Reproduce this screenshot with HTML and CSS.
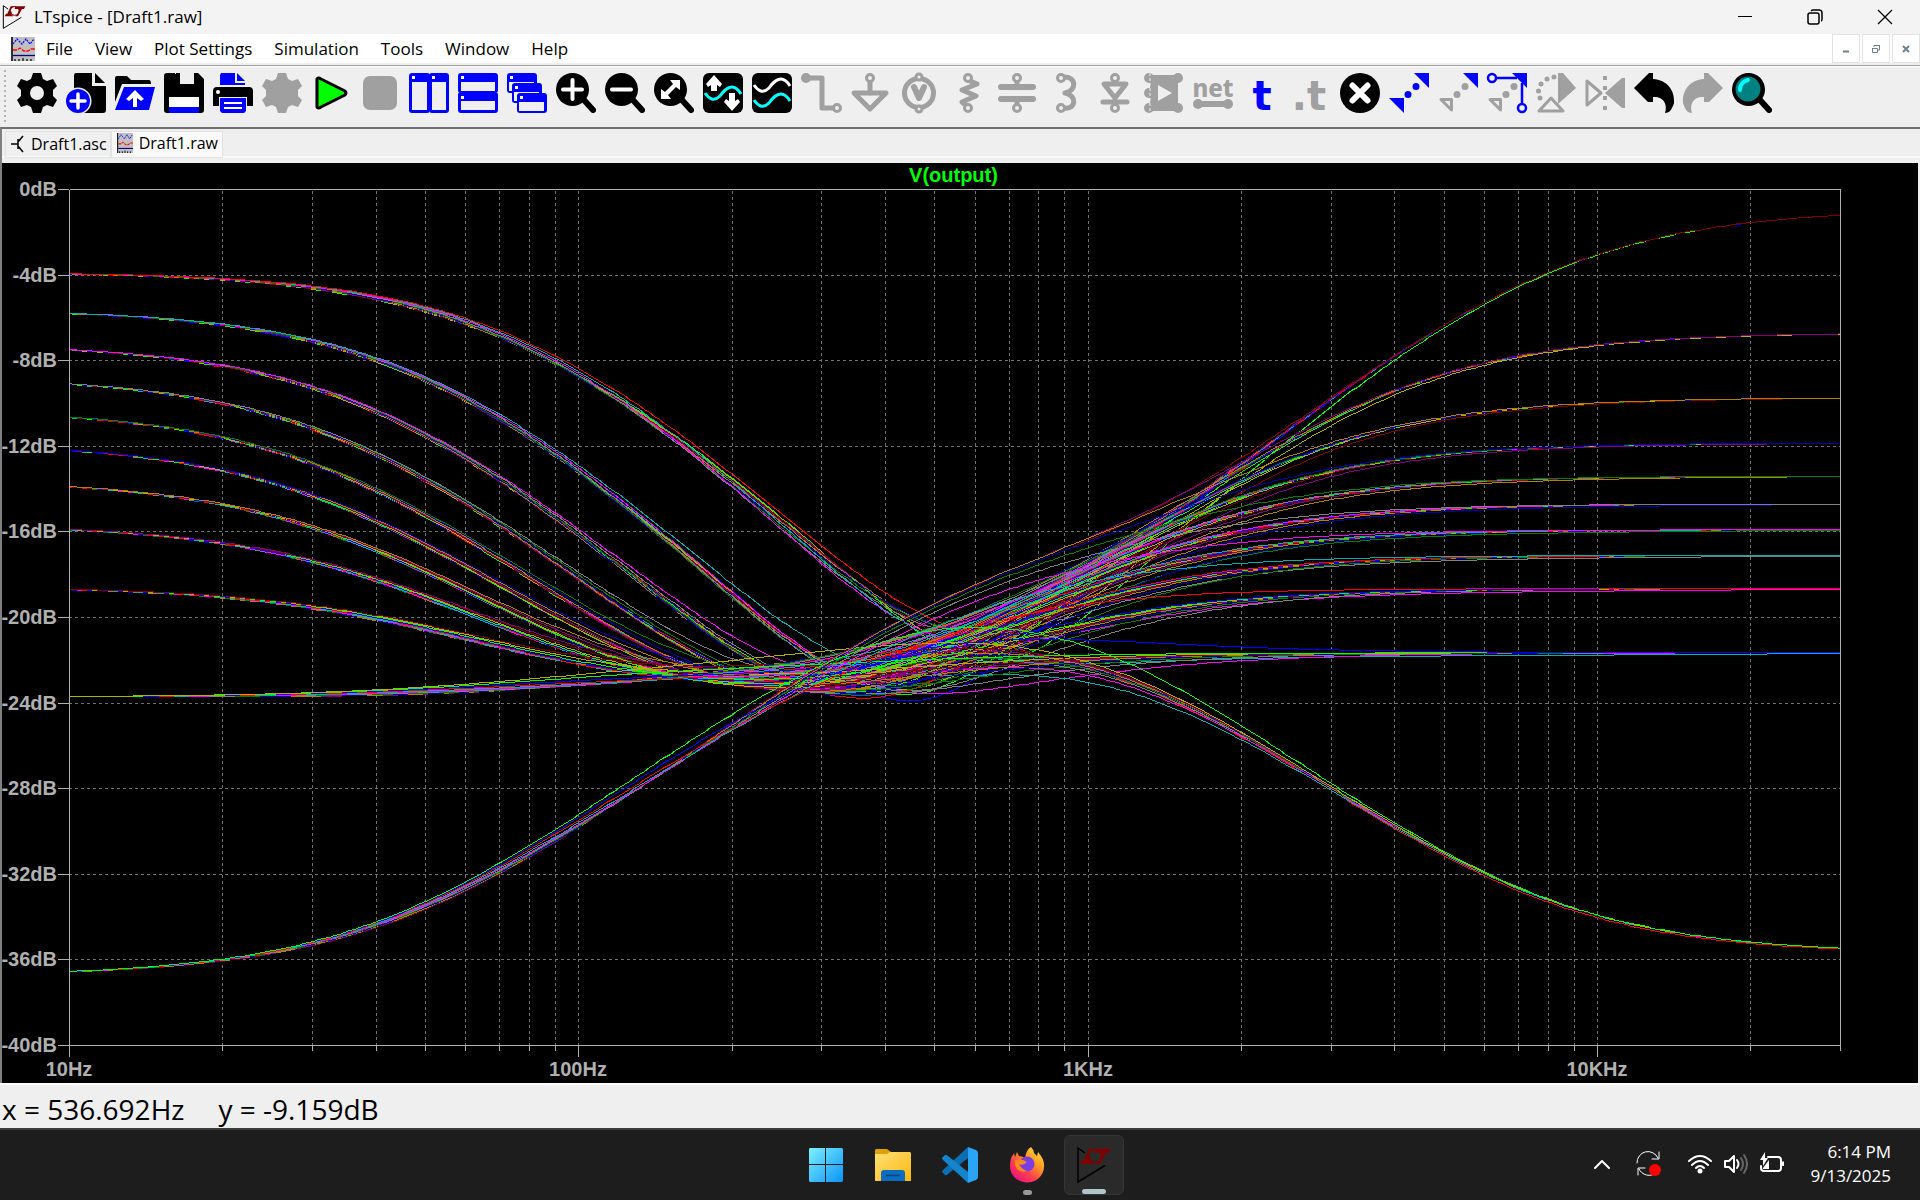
FILE: index.html
```html
<!DOCTYPE html>
<html lang="en">
<head>
<meta charset="utf-8">
<title>LTspice - [Draft1.raw]</title>
<link rel="stylesheet" href="styles.css">
</head>
<body>
<svg class="defs" width="0" height="0" aria-hidden="true">
  <symbol id="lt" viewBox="0 0 36 36">
    <path d="M9 6 2 1V35L29 18.500" fill="none" stroke="#000" stroke-width="1.500"/>
    <path d="M13 2H19Q13 5 13 9T17 17H4L6 13H8Z" fill="#800000"/>
    <path d="M20 2H35L33 6H30L24 17H20Q25 12 25 8L24 6H19Z" fill="#800000"/>
    <path d="M15 3Q21 0 24 6M13 9Q14 17 22 15" fill="none" stroke="#800000" stroke-width="1.500"/>
  </symbol>
  <symbol id="wave" viewBox="0 0 24 24" preserveAspectRatio="none">
    <path d="M0 0H24V24H0Z" fill="#c0c0c0"/>
    <path d="M1 0V24" stroke="#000" stroke-width="1.500"/>
    <path d="M2 7 6 2 11 7 15 2 19 7 23 2" fill="none" stroke="#00f" stroke-width="1.200" stroke-dasharray="2 1"/>
    <path d="M2 13H6L9 11 13 14H17L20 12H24" fill="none" stroke="#f00" stroke-width="1.300" stroke-dasharray="4 1"/>
    <path d="M2 18.500H24" stroke="#000080" stroke-width="1.300"/>
    <path d="M4 22V24M8 22V24M12 21V24M16 22V24M20 22V24" stroke="#000" stroke-width="1.200"/>
  </symbol>
  <symbol id="gear" viewBox="0 0 40 40">
    <path fill-rule="evenodd" d="M16 0H24L26 6 30 8 36 6 40 13 36 17V23L40 27 36 34 30 32 26 34 24 40H16L14 34 10 32 4 34 0 27 4 23V17L0 13 4 6 10 8 14 6ZM20 13A7 7 0 1 0 20 27 7 7 0 1 0 20 13Z"/>
  </symbol>
  <symbol id="lens" viewBox="0 0 40 40">
    <path d="M28 27 37 37" stroke="#000" stroke-width="6" stroke-linecap="round"/>
    <circle cx="16.500" cy="16.500" r="16.500"/>
  </symbol>
</svg>

<header class="titlebar">
  <svg class="title-icon"><use href="#lt"/></svg>
  <h1 class="title">LTspice - [Draft1.raw]</h1>
  <div class="window-buttons">
    <button aria-label="Minimize"><svg width="16" height="16"><path d="M1 7.500H15" stroke="#000"/></svg></button>
    <button aria-label="Restore"><svg width="16" height="16" fill="none" stroke="#000" stroke-width="1.500"><rect x="1" y="4" width="11" height="11" rx="2"/><path d="M4 2Q5 1 6 1H12Q15 1 15 4V10Q15 12 14 12"/></svg></button>
    <button aria-label="Close"><svg width="16" height="16"><path d="M1 1 15 15M15 1 1 15" stroke="#000" stroke-width="1.300"/></svg></button>
  </div>
</header>

<nav class="menubar" aria-label="Menu">
  <svg class="menu-icon"><use href="#wave"/></svg>
  <button>File</button><button>View</button><button>Plot Settings</button><button>Simulation</button><button>Tools</button><button>Window</button><button>Help</button>
  <div class="mdi-buttons">
    <button aria-label="Minimize document"><svg width="10" height="10"><path d="M2 7.500H8" stroke="#708090" stroke-width="2"/></svg></button>
    <button aria-label="Restore document"><svg width="10" height="10" fill="none" stroke="#708090"><path d="M3 3V1.500H8.500V6H7"/><path d="M1 4.500H6.500V8.500H1.500V4M3 1.500H9"/></svg></button>
    <button aria-label="Close document"><svg width="10" height="10"><path d="M2 2 8 8M8 2 2 8" stroke="#708090" stroke-width="2"/></svg></button>
  </div>
</nav>

<div class="toolbar" role="toolbar" aria-label="Tools">
  <span class="grip"></span>
  <button aria-label="Settings"><svg viewBox="0 0 40 40"><use href="#gear"/></svg></button>
  <button aria-label="New schematic"><svg viewBox="0 0 40 40"><path d="M10 0H26V13H40V37Q40 40 37 40H8V3Q8 0 10 0Z"/><path d="M29 0 39 10H29Z"/><circle cx="12" cy="28" r="13.500" fill="#efefef"/><circle cx="12" cy="28" r="12" fill="#00f"/><path d="M12 21V35M5 28H19" stroke="#fff" stroke-width="3.500" stroke-linecap="round"/></svg></button>
  <button aria-label="Open"><svg viewBox="0 0 40 40"><path d="M2 3H12L16 7H34Q36 7 36 11H7L0 29V5Q0 3 2 3Z"/><path d="M9 14H40L34 37H0Z" fill="#00f"/><path d="M20 17 29 26 26 28 22 25V34H18V25L14 28 11 26Z" fill="#fff"/></svg></button>
  <button aria-label="Save"><svg viewBox="0 0 40 40"><path d="M3 0H34L40 6V37Q40 40 37 40H3Q0 40 0 37V3Q0 0 3 0Z"/><path d="M11 0H30V11H11Z" fill="#efefef"/><path d="M12 0H16V10H12Z"/><path d="M11 1H16V11H11Z"/><path d="M5 24H35V34H5Z" fill="#fff"/><path d="M5 34H35V40H5Z" fill="#00f"/></svg></button>
  <button aria-label="Print"><svg viewBox="0 0 40 40"><path d="M8 0H22V10H32V12H7V2Z" fill="#00f"/><path d="M24 0 32 8H24Z" fill="#00f"/><path d="M4 14H36Q40 14 40 18V33H34V24H6V33H0V18Q0 14 4 14Z"/><circle cx="5" cy="19" r="2" fill="#fff"/><path d="M7 25H33V38L31 40H9L7 38Z" fill="#00f"/><path d="M11 30H29M11 35H29" stroke="#fff" stroke-width="2"/></svg></button>
  <button class="off" aria-label="Configure analysis" disabled><svg viewBox="0 0 40 40"><use href="#gear"/><circle cx="20" cy="20" r="9"/></svg></button>
  <button aria-label="Run"><svg viewBox="0 0 40 40"><path d="M6 6Q7 4 10 6L34 18Q36 20 34 22L10 34Q7 36 6 34Z" fill="#0f0" stroke="#000" stroke-width="3" stroke-linejoin="round"/></svg></button>
  <button class="off" aria-label="Stop" disabled><svg viewBox="0 0 40 40"><rect x="3" y="3" width="34" height="34" rx="7"/></svg></button>
  <button aria-label="Tile vertically"><svg viewBox="0 0 40 40"><rect width="21" height="40" rx="3" fill="#00f"/><rect x="20" width="20" height="40" rx="3" fill="#00f"/><path d="M3 9H18V37H3ZM23 9H37V37H23Z" fill="#efefef"/><path d="M3 3H6V6H3ZM23 3H26V6H23Z" fill="#fff"/></svg></button>
  <button aria-label="Tile horizontally"><svg viewBox="0 0 40 40"><rect width="40" height="20" rx="3" fill="#00f"/><rect y="19" width="40" height="21" rx="3" fill="#00f"/><path d="M3 9H37V18H3ZM3 28H37V37H3Z" fill="#efefef"/><path d="M3 3H6V6H3ZM3 23H6V26H3Z" fill="#fff"/></svg></button>
  <button aria-label="Cascade"><svg viewBox="0 0 40 40"><g id="card"><rect width="30" height="20" rx="3" fill="#00f"/><path d="M2 9H27V18H2Z" fill="#efefef"/><path d="M3 3H6V6H3Z" fill="#fff"/></g><use href="#card" x="5" y="10"/><use href="#card" x="10" y="20"/></svg></button>
  <button aria-label="Zoom in"><svg viewBox="0 0 40 40"><use href="#lens"/><path d="M16.500 7V26M7 16.500H26" stroke="#fff" stroke-width="4" stroke-linecap="round"/></svg></button>
  <button aria-label="Zoom out"><svg viewBox="0 0 40 40"><use href="#lens"/><path d="M7 16.500H26" stroke="#fff" stroke-width="4" stroke-linecap="round"/></svg></button>
  <button aria-label="Zoom to fit"><svg viewBox="0 0 40 40"><use href="#lens"/><path d="M16 7H26V17L22 14 14 22 17 26H7V16L11 19 19 11Z" fill="#fff"/></svg></button>
  <button aria-label="Autorange"><svg viewBox="0 0 40 40"><rect width="40" height="40" rx="6"/><path d="M2 20C6 26 11 29 17 23C22 16 30 8 38 21" fill="none" stroke="#0ff" stroke-width="3"/><path d="M11 2 19 11 17 14 14 12V18H8V12L5 14 3 11ZM29 38 21 29 23 26 26 28V20H32V28L35 26 37 29Z" fill="#fff"/></svg></button>
  <button aria-label="Add traces"><svg viewBox="0 0 40 40"><rect width="40" height="40" rx="6"/><path d="M2 12C6 18 11 21 17 15C22 8 30 0 38 13" fill="none" stroke="#fff" stroke-width="3"/><path d="M2 27C6 33 11 36 17 30C22 23 30 15 38 28" fill="none" stroke="#0ff" stroke-width="3"/></svg></button>
  <button class="off" aria-label="Wire" disabled><svg viewBox="0 0 40 40"><circle cx="5" cy="5" r="5"/><path d="M5 5H21V35H33" class="line"/><circle cx="36" cy="35" r="3.500" class="line thin hole"/></svg></button>
  <button class="off" aria-label="Ground" disabled><svg viewBox="0 0 40 40"><path d="M4 20H36L20 36Z" class="line"/><path d="M20 8V20" class="line"/><circle cx="20" cy="5" r="3.500" class="line thin hole"/></svg></button>
  <button class="off" aria-label="Voltage source" disabled><svg viewBox="0 0 40 40"><circle cx="20" cy="20" r="14.500" class="line"/><path d="M15 14 20 25 25 14" class="line wide"/><circle cx="20" cy="4" r="3" class="line thin hole"/><circle cx="20" cy="36" r="3" class="line thin hole"/></svg></button>
  <button class="off" aria-label="Resistor" disabled><svg viewBox="0 0 40 40"><path d="M20 7 29 11 14 17 28 23 14 29 20 34" class="line"/><circle cx="20" cy="5" r="3.500" class="line thin hole"/><circle cx="20" cy="35" r="3.500" class="line thin hole"/></svg></button>
  <button class="off" aria-label="Capacitor" disabled><svg viewBox="0 0 40 40"><path d="M4 14H36M4 26H36" class="line wide"/><path d="M20 8V14M20 26V32" class="line"/><circle cx="20" cy="5" r="3.500" class="line thin hole"/><circle cx="20" cy="35" r="3.500" class="line thin hole"/></svg></button>
  <button class="off" aria-label="Inductor" disabled><svg viewBox="0 0 40 40"><path d="M17 4C31 3 31 18 19 20 31 22 31 37 17 35" class="line"/><circle cx="15" cy="5" r="3.500" class="line thin hole"/><circle cx="15" cy="35" r="3.500" class="line thin hole"/></svg></button>
  <button class="off" aria-label="Diode" disabled><svg viewBox="0 0 40 40"><path d="M9 11H31L20 25ZM8 29H32" class="line"/><circle cx="20" cy="5" r="3.500" class="line thin hole"/><circle cx="20" cy="35" r="3.500" class="line thin hole"/></svg></button>
  <button class="off" aria-label="Component" disabled><svg viewBox="0 0 40 40"><path fill-rule="evenodd" d="M6 2H34V38H6ZM14 12V28L28 20Z"/><circle cx="5" cy="5" r="5"/><circle cx="5" cy="20" r="5"/><circle cx="5" cy="35" r="5"/><circle cx="34" cy="5" r="5"/><circle cx="34" cy="35" r="5"/><path d="M6 0V40" stroke="#efefef" stroke-dasharray="3 2"/></svg></button>
  <button class="off" aria-label="Net name" disabled><svg viewBox="0 0 40 40"><text x="20" y="24" class="net">net</text><path d="M5 31H35" class="line wide"/><circle cx="5" cy="31" r="5"/><circle cx="35" cy="31" r="5"/></svg></button>
  <button aria-label="Text"><svg viewBox="0 0 40 40"><text x="20" y="37" class="letter" fill="#00f">t</text></svg></button>
  <button class="off" aria-label="Directive" disabled><svg viewBox="0 0 40 40"><text x="18" y="37" class="letter">.t</text></svg></button>
  <button aria-label="Delete"><svg viewBox="0 0 40 40"><circle cx="20" cy="20" r="20"/><path d="M12.500 12.500 27.500 27.500M27.500 12.500 12.500 27.500" stroke="#fff" stroke-width="6" stroke-linecap="round"/></svg></button>
  <button aria-label="Duplicate"><svg viewBox="0 0 40 40" fill="#00f"><path d="M25 0H40V15ZM0 25H15V40Z"/><circle cx="27" cy="13.500" r="3.500"/><circle cx="19" cy="21.500" r="3.500"/></svg></button>
  <button class="off" aria-label="Move" disabled><svg viewBox="0 0 40 40"><path d="M25 0H40V15Z" fill="#00f"/><path d="M3 26.500H13.500V37Z" class="line thin"/><circle cx="27" cy="13.500" r="3.500"/><circle cx="19" cy="21.500" r="3.500"/></svg></button>
  <button class="off" aria-label="Drag" disabled><svg viewBox="0 0 40 40"><path d="M25 0H40V15Z" fill="#00f"/><path d="M3 26.500H13.500V37Z" class="line thin"/><circle cx="27" cy="13.500" r="3.500"/><circle cx="19" cy="21.500" r="3.500"/><g fill="none" stroke="#00f" stroke-width="2.500"><circle cx="5" cy="5" r="4"/><circle cx="35" cy="35" r="4"/><path d="M9 5H30M35 10V31"/></g></svg></button>
  <button class="off" aria-label="Rotate" disabled><svg viewBox="0 0 40 40"><path d="M22 0H27L40 15 22 31Z"/><path d="M3 38 15 25 27 38Z" class="line thin"/><circle cx="18" cy="4" r="2.500"/><circle cx="11" cy="6" r="2.500"/><circle cx="5" cy="11" r="2.500"/><circle cx="2.500" cy="18" r="2.500"/><circle cx="4" cy="25" r="2.500"/></svg></button>
  <button class="off" aria-label="Mirror" disabled><svg viewBox="0 0 40 40"><path d="M2 8V32L16 20Z" class="line thin"/><path d="M40 5V35H37L20 20 37 5Z"/><path d="M20 3V40" stroke="#a0a0a0" stroke-width="4" stroke-dasharray="4 6"/></svg></button>
  <button aria-label="Undo"><svg viewBox="0 0 40 40"><path d="M0 15 15 0H19V6C33 7 41 17 40 30 38 36 36 40 31 40 34 31 29 23 19 24V29H14Z"/></svg></button>
  <button class="off" aria-label="Redo" disabled><svg viewBox="0 0 40 40"><path d="M40 15 25 0H21V6C7 7-1 17 0 30 2 36 4 40 9 40 6 31 11 23 21 24V29H26Z"/></svg></button>
  <button aria-label="Search"><svg viewBox="0 0 40 40"><use href="#lens"/><circle cx="16" cy="16" r="12.500" fill="#008080"/><path d="M8 17Q8 9 16 7" stroke="#0ff" stroke-width="4" fill="none" stroke-linecap="round"/></svg></button>
</div>

<div class="tabs" role="tablist">
  <button role="tab" class="tab"><svg viewBox="0 0 16 20"><path d="M2 10H9M9 5V15M9 8 14 2M9 12 14 18" stroke="#000" fill="none" stroke-width="1.500"/></svg>Draft1.asc</button>
  <button role="tab" class="tab active" aria-selected="true"><svg><use href="#wave"/></svg>Draft1.raw</button>
</div>

<main class="plot"><svg id="plot" role="img" aria-label="V(output)"></svg></main>

<footer class="status"><span>x = 536.692Hz</span><span>y = -9.159dB</span></footer>

<div class="taskbar">
  <div></div>
  <div class="apps">
    <button aria-label="Start"><svg viewBox="0 0 36 36"><defs><linearGradient id="win" x2="1" y2="1"><stop stop-color="#7df0ff"/><stop offset="1" stop-color="#0a94fa"/></linearGradient></defs><path fill="url(#win)" d="M2 1H17V17H1V2ZM18 1H34L35 2V17H18ZM1 18H17V35H2L1 34ZM18 18H35V34L34 35H18Z"/></svg></button>
    <button aria-label="File Explorer"><svg viewBox="0 0 36 36"><defs><linearGradient id="fold" x2="1" y2="1"><stop stop-color="#ffe07a"/><stop offset="1" stop-color="#fcb80c"/></linearGradient></defs><path d="M1 2H12L16 5V10H0V3Z" fill="#e0a008"/><path d="M0 7H12L15 5H35L36 6V34H0Z" fill="url(#fold)"/><path d="M9 23H27Q30 23 30 26V34H6V26Q6 23 9 23Z" fill="#0b6cc0"/><path d="M11 28.500H25" stroke="#06427c" stroke-width="1.500"/></svg></button>
    <button aria-label="Visual Studio Code"><svg viewBox="0 0 36 36"><path d="M26 0 1 23Q-1 25 1 26L3 28Q4 29 6 27L26 11Z" fill="#0b6fb4"/><path d="M26 36 1 13Q-1 11 1 10L3 8Q4 7 6 9L26 25Z" fill="#1484cc"/><path d="M26 0 34 3Q36 4 36 6V30Q36 32 34 33L26 36Z" fill="#2aa4f4"/></svg></button>
    <button class="running" aria-label="Firefox"><svg viewBox="0 0 36 36"><defs><linearGradient id="fox" x1="1" x2="0.200" y2="1"><stop stop-color="#fff04a"/><stop offset=".4" stop-color="#ff9a20"/><stop offset=".7" stop-color="#ff3d50"/><stop offset="1" stop-color="#e01080"/></linearGradient></defs><path d="M22 0Q25 3 25 6L28 9 29 5Q36 13 35 20A17 16 0 0 1 1 19Q1 11 4 8L5 6 6 10 8 5 10 9Q13 9 16 11Q17 3 22 0Z" fill="url(#fox)"/><circle cx="18" cy="17" r="7.500" fill="#7a3ee0"/><path d="M6 13Q12 11 18 15 14 19 10 17 12 22 18 24 9 27 6 18Z" fill="#ff8a1c"/></svg></button>
    <button class="running current" aria-label="LTspice"><svg viewBox="0 0 36 36"><use href="#lt"/></svg></button>
  </div>
  <div class="tray">
    <button aria-label="Show hidden icons"><svg width="16" height="24"><path d="M1 16 8 9 15 16" class="glyph"/></svg></button>
    <button aria-label="Update available"><svg width="26" height="26"><path d="M1 12A11 11 0 0 1 22 7M23 1V8H16M20 22A11 11 0 0 1 3 18M2 24V17H9" class="glyph fine"/><circle cx="19" cy="19" r="6" fill="#f00"/></svg></button>
    <button class="quick" aria-label="Network, volume and battery">
      <svg width="24" height="24"><path d="M1 9Q12-1 23 9M4 13Q12 5 20 13M8 16Q12 12 16 16" class="glyph"/><circle cx="12" cy="19" r="2.500" fill="#fff"/></svg>
      <svg width="24" height="24"><path d="M1 9H5L10 4V20L5 15H1Z" class="glyph"/><path d="M13 8Q16 12 13 16" class="glyph"/><path d="M17 6Q21 12 17 18M20 3Q26 12 20 21" class="glyph dim"/></svg>
      <svg width="24" height="24"><path d="M8 5H18Q21 5 21 8V16Q21 19 18 19H4Q1 19 1 16V14" class="glyph"/><path d="M22 9.500H24V14H22ZM5 0V6H8L3 14V8H0ZM3 16 9 8V17H3Z" fill="#fff"/></svg>
    </button>
    <button class="clock"><span>6:14 PM</span><span>9/13/2025</span></button>
  </div>
</div>
<script src="plot.js"></script>
</body>
</html>
```
FILE: styles.css
```css
* { box-sizing: border-box; }
body {
  margin: 0;
  height: 100vh;
  display: flex;
  flex-direction: column;
  overflow: hidden;
  background: #efefef;
  color: #000;
  font: 17px/24px "Open Sans", "Noto Sans", sans-serif;
}
button { margin: 0; padding: 0; border: 0; background: none; color: inherit; font: inherit; }
svg { display: block; }
.defs { position: absolute; }

.titlebar { display: flex; align-items: center; height: 34px; background: #f3f3f3; }
.title-icon { width: 24px; height: 24px; margin: 0 8px 0 2px; }
.title { margin: 0; font-size: 17px; font-weight: 400; }
.window-buttons { display: flex; margin-left: auto; }
.window-buttons button { width: 70px; height: 34px; display: grid; place-items: center; }

.menubar { display: flex; align-items: center; height: 31px; padding-left: 11px; background: #fff; border-bottom: 2px solid #eee; }
.menu-icon { width: 24px; height: 24px; }
.menubar > button { padding: 0 11px; }
.mdi-buttons { display: flex; gap: 2px; margin-left: auto; align-self: stretch; }
.mdi-buttons button { width: 28px; display: grid; place-items: center; border: 1px solid #e3e3e3; }

.toolbar {
  display: flex;
  align-items: flex-start;
  gap: 9px;
  height: 62px;
  padding: 7px 0 0 4px;
  border-top: 1px solid #a0a0a0;
  box-shadow: inset 0 1px #fff;
}
.toolbar button { flex: 0 0 40px; height: 40px; }
.toolbar svg { width: 40px; height: 40px; overflow: visible; }
.grip { width: 4px; height: 52px; margin-top: -3px; background: repeating-linear-gradient(#b4b4b4 0 2px, transparent 2px 5px); background-size: 2px 100%; background-repeat: no-repeat; }
.off { fill: #a0a0a0; }
.line { fill: none; stroke: #a0a0a0; stroke-width: 5; stroke-linejoin: round; stroke-linecap: round; }
.thin { stroke-width: 3; }
.wide { stroke-width: 6; }
.hole { fill: #efefef; }
.net, .letter { text-anchor: middle; }
.net { font: 800 24px "Noto Sans", sans-serif; }
.letter { font: bold 40px "DejaVu Sans", sans-serif; }

.tabs {
  display: flex;
  align-items: flex-start;
  height: 36px;
  padding: 2px 0 0 3px;
  border-top: 2px solid #707070;
  border-left: 2px solid #808080;
  box-shadow: inset 0 -5px #efefef, inset 0 -7px #fafafa;
}
.tab { display: flex; align-items: center; gap: 6px; height: 27px; padding: 0 3px 2px; border: 1px solid #e2e2e2; font-size: 16px; }
.tab svg { width: 16px; height: 20px; }
.tab.active { background: #fafafa; padding: 0 4px 4px 5px; }

.plot { flex: 1; min-height: 0; margin-right: 2px; border-left: 2px solid #808080; background: #000; }
.plot svg { width: 100%; height: 100%; font: bold 20px "Liberation Sans", Arial, sans-serif; fill: #b0b0b0; shape-rendering: crispEdges; }
.name { fill: #0f0; text-anchor: middle; }
.x-label { text-anchor: middle; }
.y-label { text-anchor: end; }
.frame { fill: none; stroke: #b0b0b0; }
.grid { fill: none; stroke: #707070; stroke-dasharray: 3 3; }
.trace { fill: none; stroke-width: 1; }

.status { display: flex; align-items: center; gap: 34px; height: 45px; padding: 6px 0 0 2px; font-size: 28px; line-height: 36px; box-shadow: inset 0 2px #fff; }

.taskbar { display: grid; grid-template-columns: 1fr auto 1fr; align-items: center; height: 72px; background: #1d1d1d; border-top: 2px solid #3c3c3c; color: #fff; }
.apps { display: flex; gap: 7px; }
.apps button { position: relative; width: 60px; height: 60px; display: grid; place-items: center; border-radius: 6px; }
.apps svg { width: 36px; height: 36px; }
.apps .current { background: #2a2a2a; border: 1px solid #363636; }
.running::after { content: ""; position: absolute; bottom: 0; left: 50%; width: 9px; height: 5px; margin-left: -4px; border-radius: 3px; background: #999; }
.current::after { width: 24px; margin-left: -12px; background: #b0c4cc; }
.tray { display: flex; justify-content: flex-end; align-items: center; gap: 26px; padding: 0 29px 2px 0; }
.quick { display: flex; gap: 12px; }
.clock { display: flex; flex-direction: column; align-items: flex-end; font-size: 17px; line-height: 24px; }
.glyph { fill: none; stroke: #fff; stroke-width: 2; stroke-linecap: round; stroke-linejoin: round; }
.fine { stroke-width: 1; }
.dim { stroke: #666; }
```
FILE: plot.js
```js
// AC sweep of a passive tone stack, stepped over 11 bass and 11 treble pot positions.
const R1 = 10e3, R2 = 1e3, R3 = 10e3, RL = 47e3, POT = 100e3;
const C1 = 22e-9, C2 = 220e-9, C3 = 2.2e-9, C4 = 22e-9;

const add = (a, b) => [a[0] + b[0], a[1] + b[1]];
const mul = (a, b) => [a[0] * b[0] - a[1] * b[1], a[0] * b[1] + a[1] * b[0]];
const inv = a => { const m = a[0] * a[0] + a[1] * a[1]; return [a[0] / m, -a[1] / m]; };
const par = (r, c, w) => inv([1 / r, w * c]);

function gain(f, bass, treble) {
  const w = 2 * Math.PI * f;
  const top = add([R1, 0], par((1 - bass) * POT, C1, w));
  const low = add([R2, 0], par(bass * POT, C2, w));
  const sum = inv(add(top, low));
  const wiper = mul(low, sum);
  const yBass = inv(add(mul(mul(top, low), sum), [R3, 0]));
  const yUp = inv([(1 - treble) * POT, -1 / (w * C3)]);
  const yDown = inv([treble * POT, -1 / (w * C4)]);
  const total = add(add(yBass, yUp), add(yDown, [1 / RL, 0]));
  const h = mul(add(mul(yBass, wiper), yUp), inv(total));
  return 20 * Math.log10(Math.hypot(h[0], h[1]));
}

function solve(fn, target) {
  let lo = 0.0005, hi = 0.9995;
  for (let i = 0; i < 40; i++) {
    const mid = (lo + hi) / 2;
    if (fn(mid) < target) lo = mid; else hi = mid;
  }
  return lo;
}

const bassLevels = [-36.55, -23.7, -18.7, -15.9, -13.9, -12.2, -10.65, -9.1, -7.5, -5.8, -3.95];
const trebleLevels = [-35.45, -21.65, -18.65, -17.1, -15.9, -14.7, -13.4, -11.85, -9.75, -6.75, -1.2];
const bassSteps = bassLevels.map(v => solve(b => gain(10, b, 0.5), v));
const trebleSteps = trebleLevels.map(v => solve(t => gain(30e3, 0.5, t), v));
const colors = ["#00ff00", "#0000ff", "#ff0000", "#00b0b0", "#ff00ff", "#808080",
  "#008000", "#0000b0", "#b08000", "#800080", "#800000", "#b0b000"];

function draw() {
  const svg = document.getElementById("plot");
  const { width, height } = svg.getBoundingClientRect();
  const left = 67, right = Math.round(width) - 78, top = 26, bottom = Math.round(height) - 38;
  const decade = (right - left) / Math.log10(3000);
  const X = f => left + decade * Math.log10(f / 10);
  const Y = db => top - db * (bottom - top) / 40;
  const snap = v => Math.round(v) + 0.5;
  let grid = "", frame = `M${snap(left)} ${snap(top)}H${snap(right)}V${bottom + 6}M${snap(left)} ${snap(top)}V${bottom + 12}M${snap(left)} ${snap(bottom)}H${snap(right)}`;
  let text = `<text class="name" x="${(left + right) / 2 - 1}" y="19">V(output)</text>`;

  for (let db = 0; db >= -40; db -= 4) {
    const y = snap(Y(db));
    frame += `M${left - 11} ${y}H${left}`;
    if (db && db > -40) grid += `M${left} ${y}H${right}`;
    text += `<text class="y-label" x="${left - 12}" y="${Math.round(Y(db)) + 7}">${db}dB</text>`;
  }
  for (let base = 10; base <= 1e4; base *= 10) {
    for (let k = 1; k < 10 && k * base < 3e4; k++) {
      const x = snap(X(k * base));
      frame += `M${x} ${bottom}V${bottom + (k === 1 ? 12 : 6)}`;
      if (k * base > 10) grid += `M${x} ${top + 2}V${bottom}`;
    }
    const label = base < 1000 ? base + "Hz" : base / 1000 + "KHz";
    text += `<text class="x-label" x="${Math.round(X(base))}" y="${bottom + 31}">${label}</text>`;
  }

  let traces = "";
  for (let n = 120; n >= 0; n--) {
    const bass = bassSteps[Math.floor(n / 11)], treble = trebleSteps[n % 11];
    const points = [];
    for (let i = 0; i <= 348; i++) {
      const f = 10 * Math.pow(3000, i / 348);
      points.push(snap(X(f)) + "," + snap(Y(gain(f, bass, treble))));
    }
    traces += `<polyline class="trace" stroke="${colors[n % 12]}" points="${points.join(" ")}"/>`;
  }
  svg.innerHTML = `<path class="grid" d="${grid}"/>${traces}<path class="frame" d="${frame}"/>${text}`;
}

draw();
window.addEventListener("resize", draw);
```
